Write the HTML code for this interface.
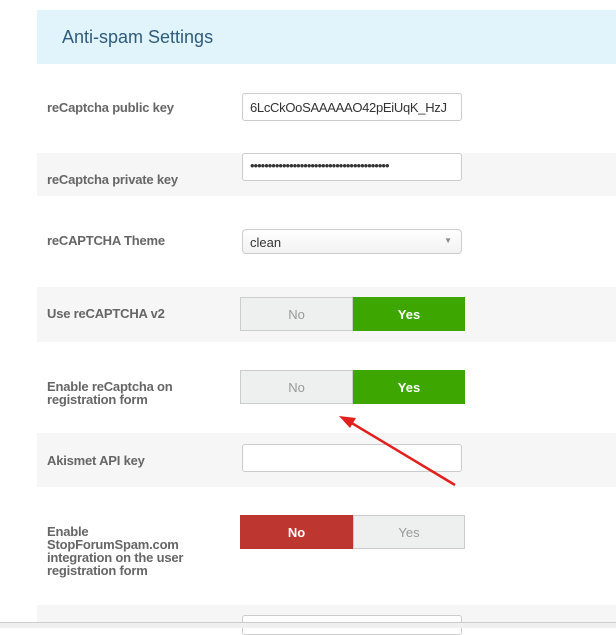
<!DOCTYPE html>
<html><head><style>
*{box-sizing:border-box;margin:0;padding:0}
body{width:616px;height:628px;background:#fff;position:relative;overflow:hidden;font-family:"Liberation Sans",sans-serif}
.a{position:absolute}
.hdr{left:37px;top:10px;width:579px;height:54px;background:#e1f4fb}
.hdr span{position:absolute;left:25px;top:17px;font-size:18px;color:#2f5b7c}
.row{left:37px;width:579px}
.g{background:#f6f6f6}
.lbl{position:absolute;left:47px;font-size:13px;font-weight:bold;color:#666;line-height:13px;letter-spacing:-0.2px}
.inp{position:absolute;left:242px;width:220px;height:28px;border:1px solid #ccc;border-radius:3px;background:#fff;font-size:13px;color:#333;padding:6px 0 0 7px;white-space:nowrap;overflow:hidden}
.tg{position:absolute;left:240px;width:225px;height:34px;display:flex;font-size:13px}
.tg div{flex:0 0 113px;display:flex;align-items:center;justify-content:center}
.tg div+div{flex:0 0 112px}
.off{background:#eeefef;color:#999;border:1px solid #ccc}
.yes{background:#3da600;color:#fff;font-weight:bold}
.no{background:#bd362f;color:#fff;font-weight:bold}
</style></head><body>
<div class="a hdr"><span>Anti-spam Settings</span></div>
<div class="a row g" style="top:153px;height:43px"></div>
<div class="a row g" style="top:287px;height:55px"></div>
<div class="a row g" style="top:433px;height:54px"></div>
<div class="a row g" style="top:605px;height:23px"></div>

<div class="lbl" style="top:101px">reCaptcha public key</div>
<div class="inp" style="top:93px;letter-spacing:-0.3px">6LcCkOoSAAAAAO42pEiUqK_HzJ</div>
<div class="lbl" style="top:173px">reCaptcha private key</div>
<div class="inp" style="top:153px;padding-top:4px;letter-spacing:-1px">•••••••••••••••••••••••••••••••••••••••</div>
<div class="lbl" style="top:234px">reCAPTCHA Theme</div>
<div class="inp" style="top:229px;height:25px;border-radius:4px;background:linear-gradient(#fff,#f2f2f2);padding-top:5px">clean<span style="position:absolute;right:9px;top:6px;font-size:8px;color:#888">▼</span></div>
<div class="lbl" style="top:307px">Use reCAPTCHA v2</div>
<div class="tg" style="top:297px"><div class="off">No</div><div class="yes">Yes</div></div>
<div class="lbl" style="top:380px">Enable reCaptcha on<br>registration form</div>
<div class="tg" style="top:370px"><div class="off">No</div><div class="yes">Yes</div></div>
<div class="lbl" style="top:454px">Akismet API key</div>
<div class="inp" style="top:444px"></div>
<div class="lbl" style="top:525px">Enable<br>StopForumSpam.com<br>integration on the user<br>registration form</div>
<div class="tg" style="top:515px"><div class="no">No</div><div class="off">Yes</div></div>
<div class="inp" style="top:615px;height:20px"></div>
<div class="a" style="left:0;top:622px;width:616px;height:6px;background:#f0f0f0;border-top:1px solid #ccc"></div>

<svg class="a" style="left:0;top:0" width="616" height="628">
<line x1="455" y1="485" x2="350" y2="422" stroke="#e2201e" stroke-width="2.5"/>
<polygon points="339,416 356,418 350,428" fill="#e2201e"/>
</svg>
</body></html>
